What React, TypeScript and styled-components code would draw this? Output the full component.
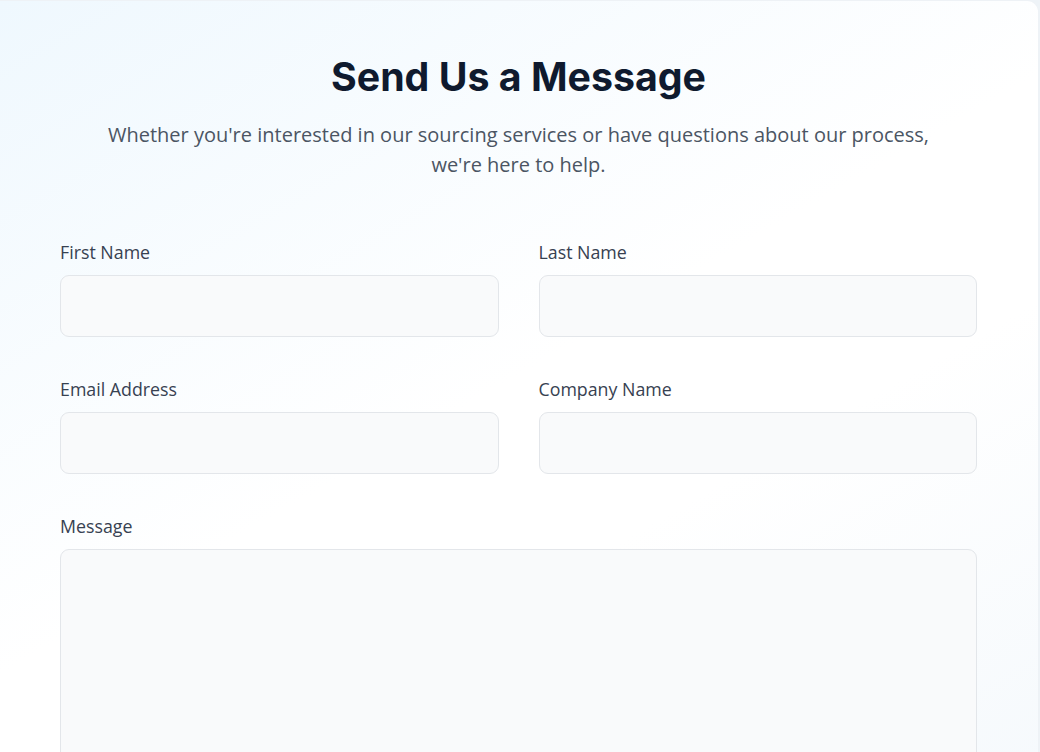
import React from "react";
import styled, { createGlobalStyle } from "styled-components";

const Global = createGlobalStyle`
  html, body { margin: 0; padding: 0; }
  body {
    background: #eef3f7;
    font-family: "Open Sans", "Noto Sans", sans-serif;
  }
  * { box-sizing: border-box; }
`;

const Card = styled.section`
  width: 1039px;
  min-height: 900px;
  padding: 52px 61px 60px 60px;
  background: linear-gradient(150deg, #eff8fe 0%, #ffffff 45%, #ffffff 60%, #f3f8fc 100%);
  border: 1px solid #eef2f6;
  border-left: none;
  border-top-right-radius: 12px;
`;

const Header = styled.header`
  display: flex;
  flex-direction: column;
  align-items: center;
  text-align: center;
  margin-bottom: 60px;
`;

const Title = styled.h2`
  margin: 0 0 19px;
  font-family: "Inter", "Liberation Sans", sans-serif;
  font-weight: 700;
  font-size: 39.3px;
  line-height: 48px;
  color: #0f1a2e;
`;

const Subtitle = styled.p`
  margin: 0;
  max-width: 860px;
  font-size: 20px;
  line-height: 30px;
  color: #4b5563;
`;

const Form = styled.form`
  display: grid;
  grid-template-columns: 1fr 1fr;
  column-gap: 40px;
  row-gap: 40px;
`;

const Field = styled.div<{ $wide?: boolean }>`
  display: flex;
  flex-direction: column;
  grid-column: ${(p) => (p.$wide ? "1 / -1" : "auto")};
`;

const Label = styled.label`
  font-size: 17.8px;
  line-height: 24px;
  color: #374151;
  margin-bottom: 11px;
`;

const Input = styled.input`
  height: 62px;
  width: 100%;
  padding: 0 16px;
  border: 1px solid #e3e6ea;
  border-radius: 9px;
  background: #f9fafb;
  font-family: inherit;
  font-size: 16px;
  outline: none;
`;

const TextArea = styled.textarea`
  height: 240px;
  width: 100%;
  padding: 14px 16px;
  border: 1px solid #e3e6ea;
  border-radius: 9px;
  background: #f9fafb;
  font-family: inherit;
  font-size: 16px;
  resize: none;
  outline: none;
`;

export default function App() {
  return (
    <>
      <Global />
      <Card>
        <Header>
          <Title>Send Us a Message</Title>
          <Subtitle>
            Whether you're interested in our sourcing services or have questions about our process, we're here to help.
          </Subtitle>
        </Header>
        <Form onSubmit={(e) => e.preventDefault()}>
          <Field>
            <Label htmlFor="first">First Name</Label>
            <Input id="first" type="text" />
          </Field>
          <Field>
            <Label htmlFor="last">Last Name</Label>
            <Input id="last" type="text" />
          </Field>
          <Field>
            <Label htmlFor="email">Email Address</Label>
            <Input id="email" type="email" />
          </Field>
          <Field>
            <Label htmlFor="company">Company Name</Label>
            <Input id="company" type="text" />
          </Field>
          <Field $wide>
            <Label htmlFor="message">Message</Label>
            <TextArea id="message" />
          </Field>
        </Form>
      </Card>
    </>
  );
}
